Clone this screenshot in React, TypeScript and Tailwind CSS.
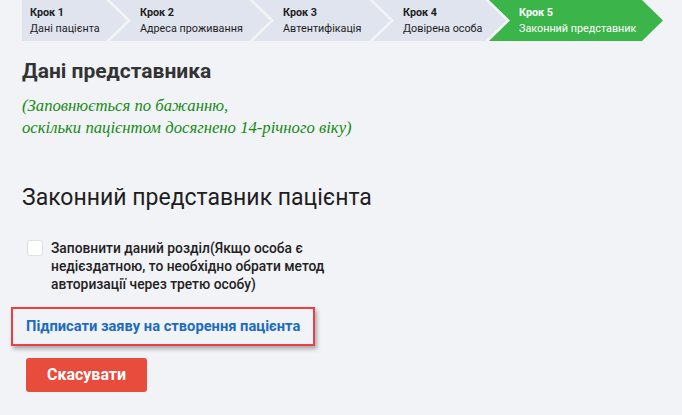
const steps = [
  { n: 'Крок 1', label: 'Дані пацієнта', w: 'w-[105px]', first: true },
  { n: 'Крок 2', label: 'Адреса проживання', w: 'w-[160px]' },
  { n: 'Крок 3', label: 'Автентифікація', w: 'w-[137px]' },
  { n: 'Крок 4', label: 'Довірена особа', w: 'w-[133px]' },
  { n: 'Крок 5', label: 'Законний представник', w: 'w-[174px]', active: true },
];

const Stepper = () => (
  <div className="flex pl-[22px]">
    {steps.map((s, i) => (
      <div
        key={s.n}
        className={[
          'h-[41px] flex flex-col justify-center text-[10.8px] leading-[16px]',
          s.w,
          i > 0 ? '-ml-[17px] pl-[30px]' : 'pl-[8px]',
          s.first
            ? '[clip-path:polygon(0_0,calc(100%-21px)_0,100%_50%,calc(100%-21px)_100%,0_100%)]'
            : '[clip-path:polygon(0_0,calc(100%-21px)_0,100%_50%,calc(100%-21px)_100%,0_100%,21px_50%)]',
          s.active ? 'bg-[#3bb44a] text-white' : 'bg-[#dfe4ee] text-[#1e1e1e]',
        ].join(' ')}
      >
        <div className="font-bold">{s.n}</div>
        <div className="whitespace-nowrap">{s.label}</div>
      </div>
    ))}
  </div>
);

export default function App() {
  return (
    <div className="min-h-[415px] w-[682px] bg-[#f2f3f7] font-['Roboto',sans-serif] text-[#222]">
      <Stepper />

      <div className="px-[22px]">
        <h2 className="mt-[16px] text-[21px] leading-[28px] font-bold text-[#333]">Дані представника</h2>

        <p className="mt-[10px] font-['Liberation_Serif',serif] italic text-[16.7px] leading-[22px] text-[#148a14]">
          (Заповнюється по бажанню,
          <br />
          оскільки пацієнтом досягнено 14-річного віку)
        </p>

        <h3 className="mt-[45px] text-[23px] leading-[28px] text-[#1e1e1e]">Законний представник пацієнта</h3>

        <label className="mt-[27px] flex items-start gap-[8px] pl-[5px]">
          <span className="mt-[1px] h-[16px] w-[16px] shrink-0 rounded-[3px] border border-[#dcdfe6] bg-white" />
          <span className="w-[290px] text-[13.8px] leading-[18px] font-medium text-[#222]">
            Заповнити даний розділ(Якщо особа є недієздатною, то необхідно обрати метод авторизації через третю особу)
          </span>
        </label>

        <div className="mt-[14px] -ml-[11px] w-[304px] h-[39px] flex items-center pl-[13px] border-2 border-[#ef3d46] shadow-[2px_3px_4px_rgba(0,0,0,0.3)]">
          <span className="text-[14.7px] font-bold text-[#1b6bc0]">Підписати заяву на створення пацієнта</span>
        </div>

        <button className="mt-[12px] ml-[4px] h-[34px] w-[121px] rounded-[3px] bg-[#e84c3d] text-[16px] font-bold text-white">
          Скасувати
        </button>
      </div>
    </div>
  );
}
